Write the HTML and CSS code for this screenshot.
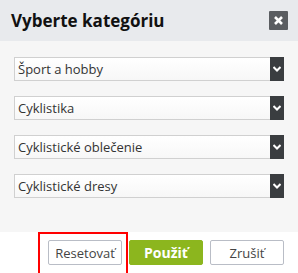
FILE: index.html
```html
<!DOCTYPE html>
<html>
<head>
    <title>Vyberte kategóriu</title>
    <link rel="stylesheet" href="styles.css">
</head>
<body>
    <div class="dialog">
        <div class="dialog-header">
            <h2>Vyberte kategóriu</h2>
            <span class="close-btn"><svg width="9" height="9" viewBox="0 0 9 9"><path d="M1 1 L8 8 M8 1 L1 8" stroke="#fff" stroke-width="2.6"/></svg></span>
        </div>
        <div class="dialog-body">
            <div class="select-box">
                <span class="select-text">Šport a hobby</span>
                <span class="select-arrow"><svg width="8" height="6" viewBox="0 0 8 6"><path d="M0.5 1 L4 4.5 L7.5 1" fill="none" stroke="#fff" stroke-width="2"/></svg></span>
            </div>
            <div class="select-box">
                <span class="select-text">Cyklistika</span>
                <span class="select-arrow"><svg width="8" height="6" viewBox="0 0 8 6"><path d="M0.5 1 L4 4.5 L7.5 1" fill="none" stroke="#fff" stroke-width="2"/></svg></span>
            </div>
            <div class="select-box">
                <span class="select-text">Cyklistické oblečenie</span>
                <span class="select-arrow"><svg width="8" height="6" viewBox="0 0 8 6"><path d="M0.5 1 L4 4.5 L7.5 1" fill="none" stroke="#fff" stroke-width="2"/></svg></span>
            </div>
            <div class="select-box">
                <span class="select-text">Cyklistické dresy</span>
                <span class="select-arrow"><svg width="8" height="6" viewBox="0 0 8 6"><path d="M0.5 1 L4 4.5 L7.5 1" fill="none" stroke="#fff" stroke-width="2"/></svg></span>
            </div>
        </div>
        <div class="dialog-footer">
            <button type="button" class="btn btn-light">Resetovať</button>
            <button type="button" class="btn btn-green">Použiť</button>
            <button type="button" class="btn btn-light">Zrušiť</button>
            <div class="highlight"></div>
        </div>
    </div>
</body>
</html>
```

FILE: styles.css
```css
body {
    margin: 0;
    background: #ffffff;
    font-family: "Open Sans", Arial, sans-serif;
}
.dialog {
    width: 298px;
    height: 273px;
    overflow: hidden;
}
.dialog-header {
    height: 41px;
    background: #e8eaed;
    display: flex;
    justify-content: space-between;
    align-items: center;
    padding: 0 10px 0 11px;
    box-sizing: border-box;
}
.dialog-header h2 {
    margin: 0;
    font-size: 17px;
    font-weight: bold;
    color: #111;
}
.close-btn {
    width: 19px;
    height: 19px;
    background: #5a5d61;
    display: flex;
    justify-content: center;
    align-items: center;
    border-radius: 1px;
}
.dialog-body {
    background: #f6f6f6;
    padding: 16px 14px 34px 14px;
    display: flex;
    flex-direction: column;
    gap: 15px;
}
.select-box {
    height: 24px;
    box-sizing: border-box;
    border: 1px solid #d0d0d0;
    background: linear-gradient(to bottom, #ffffff, #f7f7f7);
    display: flex;
    align-items: center;
}
.select-text {
    flex: 1;
    padding-left: 3px;
    font-size: 13px;
    color: #333;
}
.select-arrow {
    width: 14px;
    height: 24px;
    margin: -1px -1px -1px 0;
    background: #3a3d40;
    display: flex;
    justify-content: center;
    align-items: center;
}
.dialog-footer {
    position: relative;
    display: flex;
    justify-content: flex-end;
    gap: 7px;
    padding: 8px 14px 0 0;
}
.btn {
    width: 74px;
    height: 25px;
    font-family: "Open Sans", Arial, sans-serif;
    font-size: 13px;
    border-radius: 2px;
    padding: 0;
    cursor: pointer;
}
.btn-light {
    background: #fff;
    border: 1px solid #b9bdc6;
    color: #444;
}
.btn-green {
    background: #8cb61e;
    border: 1px solid #8cb61e;
    color: #fff;
    font-weight: bold;
    font-size: 14px;
}
.highlight {
    position: absolute;
    left: 38px;
    top: 0;
    width: 90px;
    height: 50px;
    box-sizing: border-box;
    border: 2px solid #f00;
}
```
